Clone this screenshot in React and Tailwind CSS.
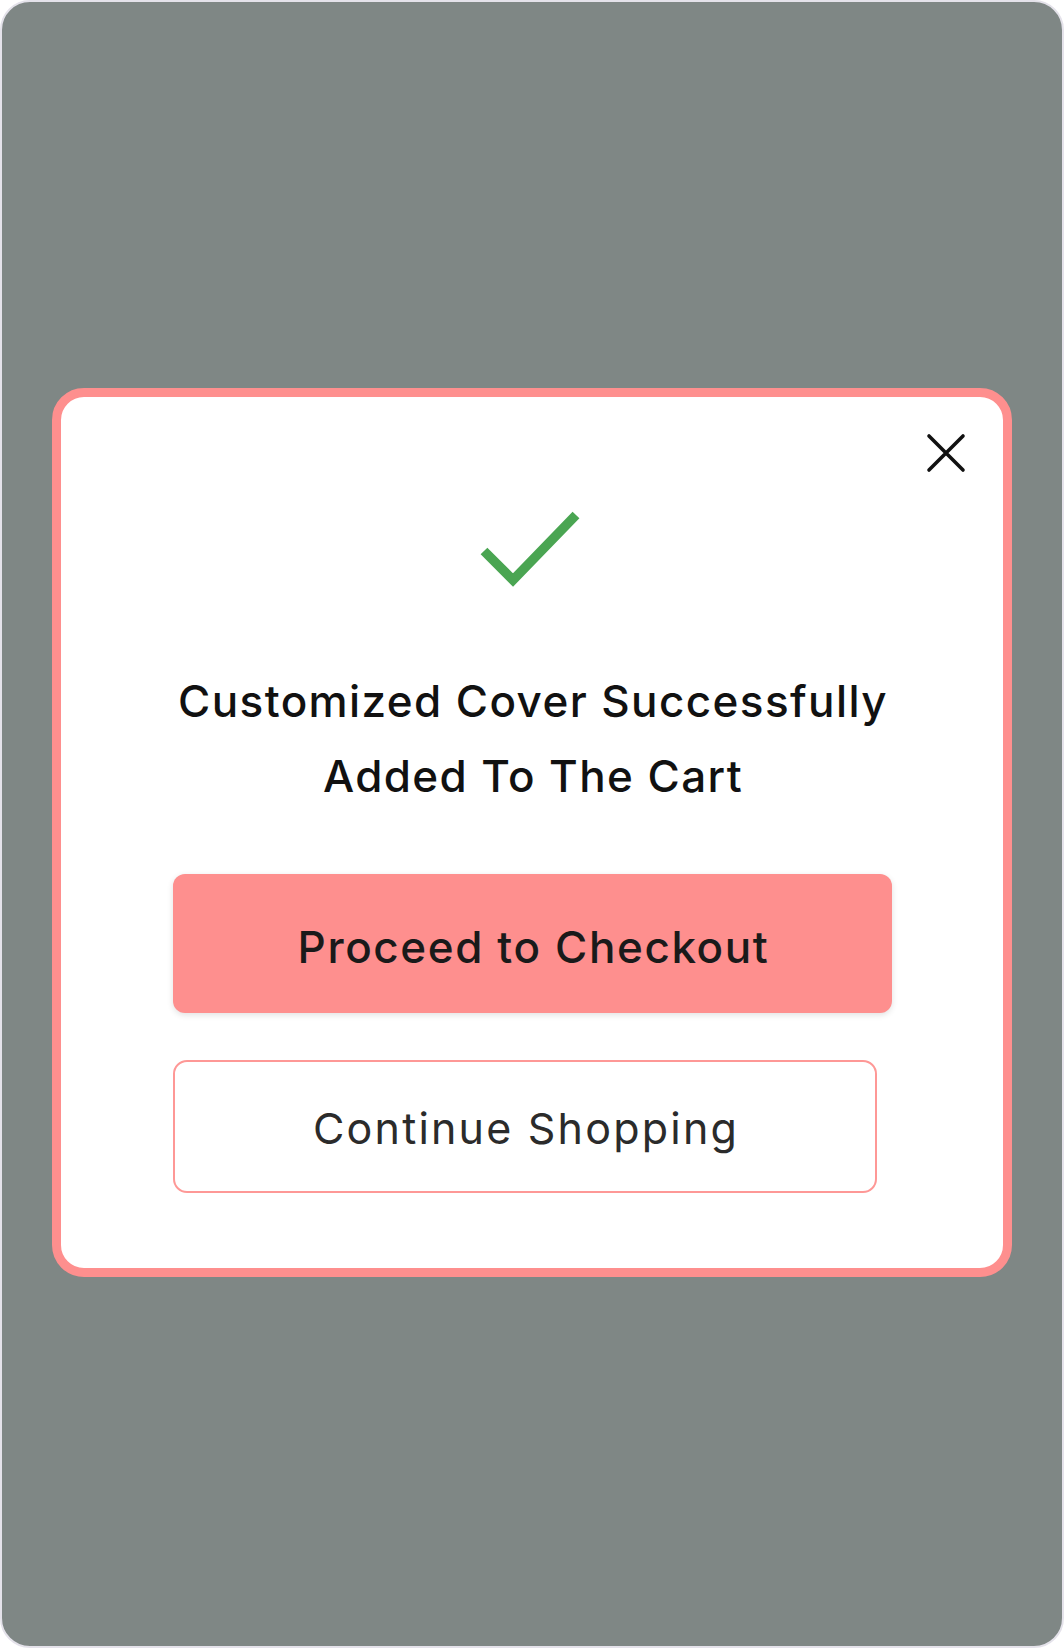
import React from "react";

export default function App() {
  return (
    <div className="bg-white" style={{ fontFamily: "Inter, 'Noto Sans', sans-serif" }}>
      <div className="h-[1648px] w-[1064px] rounded-[30px] border-2 border-[#e4e2ea] bg-[#7f8785] pl-[50px] pt-[386px]">
        <div className="relative box-border h-[889px] w-[960px] rounded-[32px] border-[9px] border-[#fe8f8e] bg-white">
          <button className="absolute right-[37px] top-[36px] flex h-[40px] w-[40px] items-center justify-center">
            <svg width="40" height="40" viewBox="0 0 40 40">
              <path d="M3 3 L37 37 M37 3 L3 37" stroke="#111" strokeWidth="3.6" strokeLinecap="round" />
            </svg>
          </button>
          <div className="flex flex-col items-center pt-[111px]">
            <svg width="100" height="80" viewBox="0 0 100 80" className="mr-[4px]">
              <path d="M4 43 L33 72 L96 7" fill="none" stroke="#4aa552" strokeWidth="9.5" strokeLinecap="butt" strokeLinejoin="miter" />
            </svg>
            <h2 className="mt-[76px] pl-[2px] text-center text-[44px] font-medium leading-[75px] tracking-[1.4px] text-[#111]">
              Customized Cover Successfully
              <br />
              Added To The Cart
            </h2>
          </div>
          <div className="mt-[60px] flex flex-col items-start pl-[112px]">
            <button className="flex h-[139px] w-[719px] items-center justify-center rounded-[12px] bg-[#fe8f8e] pl-[2px] pt-[6px] text-[44px] font-medium tracking-[1.6px] text-[#1a1a1a] shadow-[0_2px_6px_rgba(0,0,0,0.12)]">
              Proceed to Checkout
            </button>
            <button className="mt-[47px] flex h-[133px] w-[704px] items-center justify-center rounded-[14px] border-2 border-[#fe9896] bg-white pl-[2px] pt-[4px] text-[43px] font-normal tracking-[2.2px] text-[#2b2b2b]">
              Continue Shopping
            </button>
          </div>
        </div>
      </div>
    </div>
  );
}
